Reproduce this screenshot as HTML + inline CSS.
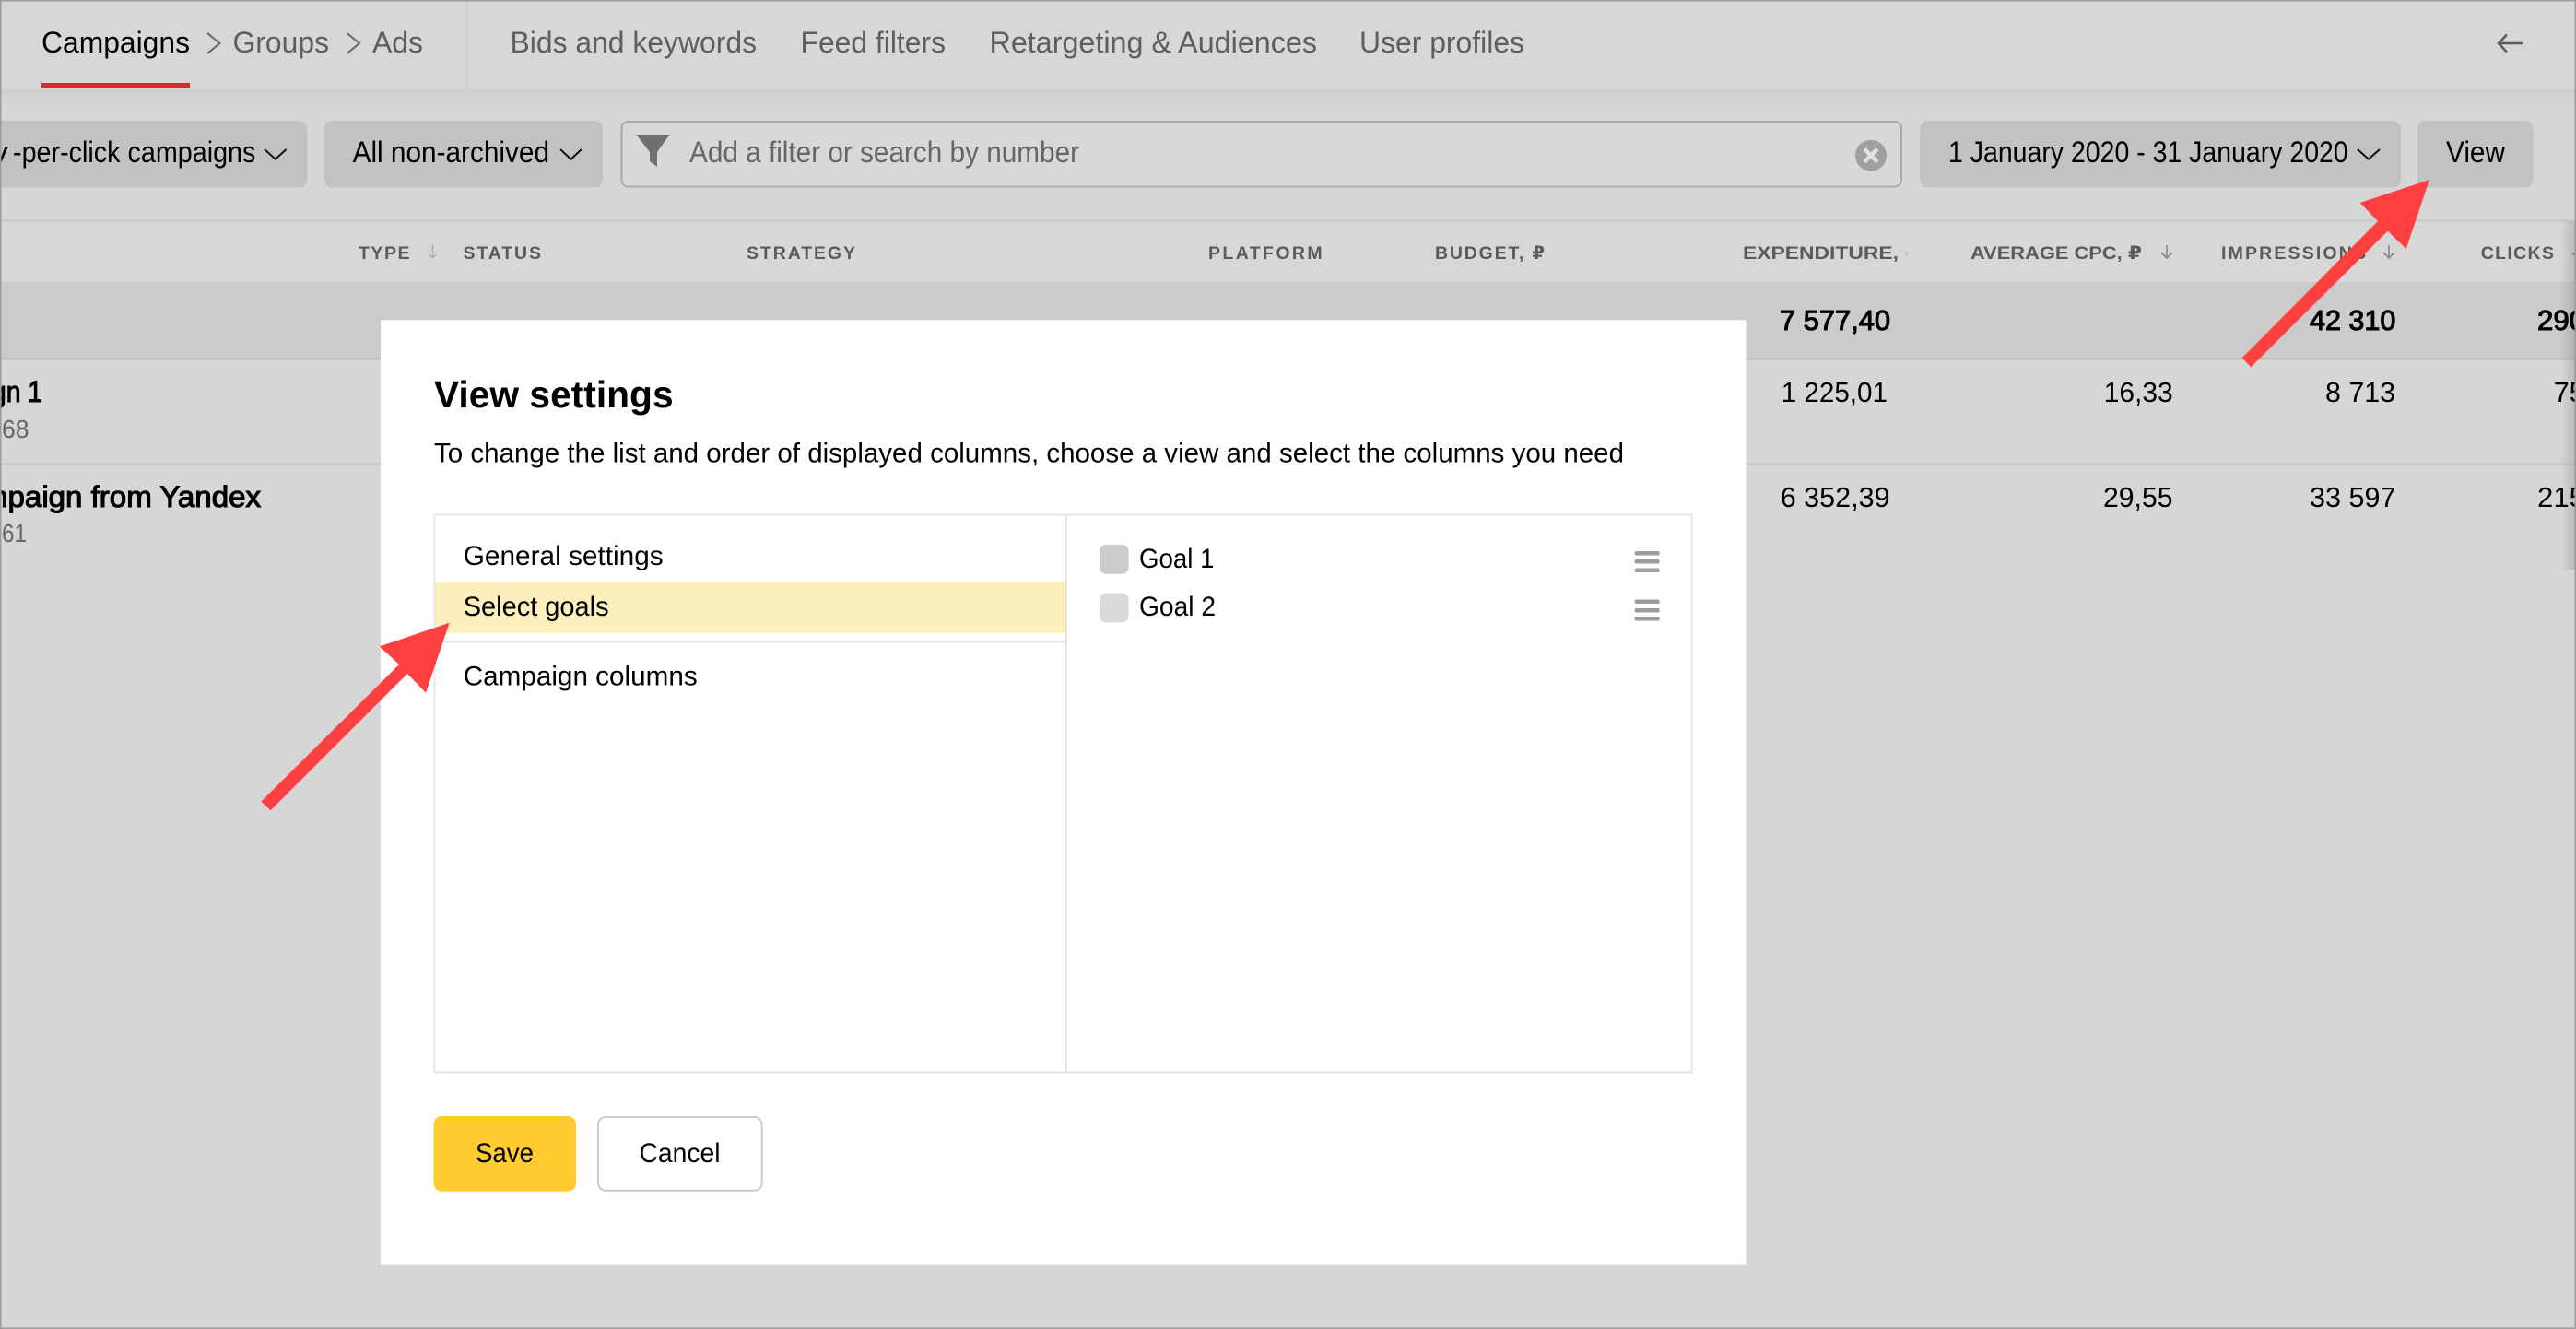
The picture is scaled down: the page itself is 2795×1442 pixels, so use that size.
<!DOCTYPE html>
<html lang="en">
<head>
<meta charset="utf-8">
<title>View settings</title>
<style>
html,body{margin:0;padding:0;width:2795px;height:1442px;overflow:hidden;background:#d6d6d6}
svg{display:block;position:absolute;left:0;top:0}
text{font-family:"Liberation Sans","DejaVu Sans",sans-serif;font-size:32px;fill:#000;white-space:pre}
.tab{fill:#5e5e5e}
.h{font-size:19.500px;font-weight:bold;fill:#5a5a5a}
.b{stroke:#000;stroke-width:1.100px}
.t{font-weight:bold;font-size:41px}
.m{font-size:30px}
.n{font-size:31px}
.g{fill:#666;font-size:28px}
</style>
</head>
<body>
<svg width="2795" height="1442" viewBox="0 0 2795 1442" xmlns="http://www.w3.org/2000/svg">
<defs>
<linearGradient id="sh" x1="0" x2="0" y1="0" y2="1"><stop offset="0" stop-color="#cfcfcf"/><stop offset="1" stop-color="#d6d6d6"/></linearGradient>
<linearGradient id="rs" x1="0" x2="1" y1="0" y2="0"><stop offset="0" stop-color="#000" stop-opacity="0"/><stop offset="1" stop-color="#000" stop-opacity=".14"/></linearGradient>
</defs>
<rect width="2795" height="1442" fill="#d6d6d6"/>

<!-- tabs -->
<rect y="0" width="2795" height="97" fill="#d7d7d7"/>
<rect y="97" width="2795" height="20" fill="url(#sh)"/>
<rect x="506" y="0" width="1.500" height="97" fill="#cbcbcb"/>
<rect x="45" y="90" width="161" height="6" fill="#d32f33"/>
<text x="45" y="57" textLength="161" lengthAdjust="spacingAndGlyphs">Campaigns</text>
<path d="M225 36 L238.500 47 L225 58" fill="none" stroke="#666" stroke-width="2"/>
<text class="tab" x="252.500" y="57" textLength="104.500" lengthAdjust="spacingAndGlyphs">Groups</text>
<path d="M376.500 36 L390 47 L376.500 58" fill="none" stroke="#666" stroke-width="2"/>
<text class="tab" x="404" y="57" textLength="55" lengthAdjust="spacingAndGlyphs">Ads</text>
<text class="tab" x="553.500" y="57" textLength="267.500" lengthAdjust="spacingAndGlyphs">Bids and keywords</text>
<text class="tab" x="868.500" y="57" textLength="157.500" lengthAdjust="spacingAndGlyphs">Feed filters</text>
<text class="tab" x="1073.500" y="57" textLength="355.500" lengthAdjust="spacingAndGlyphs">Retargeting &amp; Audiences</text>
<text class="tab" x="1475" y="57" textLength="179" lengthAdjust="spacingAndGlyphs">User profiles</text>
<path d="M2737 47 H2711 M2720 37.500 L2711 47 L2720 56.500" fill="none" stroke="#5a5a5a" stroke-width="2.500"/>

<!-- toolbar -->
<rect x="-12" y="131" width="345.500" height="72.500" rx="9" fill="#c2c2c2"/>
<text x="-9" y="176" textLength="18" lengthAdjust="spacingAndGlyphs">y</text>
<text x="14" y="176" textLength="263.400" lengthAdjust="spacingAndGlyphs">-per-click campaigns</text>
<path d="M287 162 L298.800 172.700 L310.600 162" fill="none" stroke="#111" stroke-width="2"/>
<rect x="352" y="131" width="302" height="72.500" rx="9" fill="#c2c2c2"/>
<text x="382.600" y="176" textLength="213.400" lengthAdjust="spacingAndGlyphs">All non-archived</text>
<path d="M608 162 L619.500 172.700 L631 162" fill="none" stroke="#111" stroke-width="2"/>
<rect x="674.500" y="132" width="1388.500" height="70.500" rx="7" fill="#d8d8d8" stroke="#aaa" stroke-width="2"/>
<path d="M691 147 H726 L713 165 V181 L705 175 V165 Z" fill="#707070"/>
<text x="748" y="176" textLength="423" lengthAdjust="spacingAndGlyphs" style="fill:#666">Add a filter or search by number</text>
<circle cx="2030" cy="168.700" r="17" fill="#a0a0a0"/>
<path d="M2023 161.700 L2037 175.700 M2037 161.700 L2023 175.700" stroke="#e2e2e2" stroke-width="4.500" fill="none"/>
<rect x="2083.300" y="131" width="521.700" height="72.500" rx="9" fill="#c2c2c2"/>
<text x="2114" y="176" textLength="433.700" lengthAdjust="spacingAndGlyphs">1 January 2020 - 31 January 2020</text>
<path d="M2558 162 L2570 172.700 L2582 162" fill="none" stroke="#111" stroke-width="2"/>
<rect x="2623" y="131" width="125.600" height="72.500" rx="9" fill="#c2c2c2"/>
<text x="2654" y="176" textLength="64" lengthAdjust="spacingAndGlyphs">View</text>

<!-- table -->
<rect y="238" width="2795" height="2.500" fill="#c9c9c9"/>
<rect y="240.500" width="2795" height="65.500" fill="#d7d7d7"/>
<rect y="306" width="2795" height="82" fill="#cbcbcb"/>
<rect y="388" width="2795" height="2.500" fill="#bdbdbd"/>
<rect y="502" width="2795" height="2" fill="#c9c9c9"/>

<text class="h" x="389" y="281" textLength="55.500" lengthAdjust="spacing">TYPE</text>
<path d="M469.500 266 V280 M466 276 L469.500 280 L473 276" fill="none" stroke="#aaa" stroke-width="1.300"/>
<text class="h" x="502.500" y="281" textLength="84.500" lengthAdjust="spacing">STATUS</text>
<text class="h" x="810" y="281" textLength="118" lengthAdjust="spacing">STRATEGY</text>
<text class="h" x="1311" y="281" textLength="123.600" lengthAdjust="spacing">PLATFORM</text>
<text class="h" x="1557" y="281" textLength="119" lengthAdjust="spacing">BUDGET, ₽</text>
<text class="h" x="1891" y="281" textLength="169" lengthAdjust="spacingAndGlyphs">EXPENDITURE,</text>
<rect x="2067" y="272" width="3" height="6" fill="#c8c8c8"/>
<text class="h" x="2138" y="281" textLength="186" lengthAdjust="spacingAndGlyphs">AVERAGE CPC, ₽</text>
<path d="M2351 266 V280 M2345 274 L2351 280 L2357 274" fill="none" stroke="#888" stroke-width="1.600"/>
<text class="h" x="2410" y="281" textLength="157" lengthAdjust="spacing">IMPRESSIONS</text>
<path d="M2592 266 V280 M2586 274 L2592 280 L2598 274" fill="none" stroke="#888" stroke-width="1.600"/>
<text class="h" x="2691.700" y="281" textLength="79.300" lengthAdjust="spacing">CLICKS</text>
<path d="M2797 266 V280 M2791 274 L2797 280" fill="none" stroke="#888" stroke-width="1.600"/>

<text class="b n" x="1931" y="358" textLength="120" lengthAdjust="spacingAndGlyphs">7 577,40</text>
<text class="b n" x="2506" y="358" textLength="93.300" lengthAdjust="spacingAndGlyphs">42 310</text>
<text class="b n" x="2753" y="358" textLength="52" lengthAdjust="spacingAndGlyphs">290</text>

<text class="b" x="-9" y="436" textLength="55" lengthAdjust="spacingAndGlyphs">gn 1</text>
<text class="g" x="2" y="475" textLength="29.500" lengthAdjust="spacingAndGlyphs">68</text>
<text class="n" x="1932.700" y="436" textLength="115.300" lengthAdjust="spacingAndGlyphs">1 225,01</text>
<text class="n" x="2282.700" y="436" textLength="75" lengthAdjust="spacingAndGlyphs">16,33</text>
<text class="n" x="2523" y="436" textLength="76" lengthAdjust="spacingAndGlyphs">8 713</text>
<text class="n" x="2770.700" y="436" textLength="34" lengthAdjust="spacingAndGlyphs">75</text>

<text class="b" x="-19" y="550" textLength="302" lengthAdjust="spacingAndGlyphs">mpaign from Yandex</text>
<text class="g" x="2" y="588" textLength="27" lengthAdjust="spacingAndGlyphs">61</text>
<text class="n" x="1931.700" y="550" textLength="119" lengthAdjust="spacingAndGlyphs">6 352,39</text>
<text class="n" x="2282" y="550" textLength="75.500" lengthAdjust="spacingAndGlyphs">29,55</text>
<text class="n" x="2506" y="550" textLength="93.500" lengthAdjust="spacingAndGlyphs">33 597</text>
<text class="n" x="2753" y="550" textLength="52" lengthAdjust="spacingAndGlyphs">215</text>

<rect x="2778" y="240" width="17" height="378" fill="url(#rs)"/>

<!-- modal -->
<rect x="413" y="347.300" width="1481.400" height="1025.400" fill="#fff"/>
<text class="t" x="471" y="442" textLength="259.600" lengthAdjust="spacingAndGlyphs">View settings</text>
<text class="m" x="471" y="501.500" textLength="1291" lengthAdjust="spacingAndGlyphs">To change the list and order of displayed columns, choose a view and select the columns you need</text>

<rect x="471.500" y="558.500" width="1364" height="605" fill="#fff" stroke="#e5e5e5" stroke-width="2"/>
<rect x="1156" y="559" width="2" height="604" fill="#e5e5e5"/>
<rect x="472.500" y="632" width="683.500" height="54.800" fill="#fef0bc"/>
<rect x="472.500" y="695.500" width="683.500" height="2" fill="#e5e5e5"/>
<text class="m" x="502.700" y="613" textLength="217" lengthAdjust="spacingAndGlyphs">General settings</text>
<text class="m" x="502.700" y="668" textLength="157.900" lengthAdjust="spacingAndGlyphs">Select goals</text>
<text class="m" x="502.700" y="743.500" textLength="254" lengthAdjust="spacingAndGlyphs">Campaign columns</text>

<rect x="1193" y="591" width="31.600" height="31.700" rx="7" fill="#cccccc"/>
<rect x="1193" y="643.700" width="31.600" height="31.600" rx="7" fill="#d9d9d9"/>
<text class="m" x="1236" y="616" textLength="81.500" lengthAdjust="spacingAndGlyphs">Goal 1</text>
<text class="m" x="1236" y="668" textLength="83" lengthAdjust="spacingAndGlyphs">Goal 2</text>
<g fill="#9c9c9c">
<rect x="1773.500" y="598" width="27.200" height="4.500" rx="2"/>
<rect x="1773.500" y="607" width="27.200" height="4.500" rx="2"/>
<rect x="1773.500" y="616.500" width="27.200" height="4.500" rx="2"/>
<rect x="1773.500" y="650.500" width="27.200" height="4.500" rx="2"/>
<rect x="1773.500" y="660" width="27.200" height="4.500" rx="2"/>
<rect x="1773.500" y="669" width="27.200" height="4.500" rx="2"/>
</g>

<rect x="470.500" y="1211" width="154.500" height="81.700" rx="9" fill="#ffcb2e"/>
<text class="m" x="516" y="1261" textLength="63" lengthAdjust="spacingAndGlyphs">Save</text>
<rect x="649" y="1212" width="177.700" height="79.700" rx="8" fill="#fff" stroke="#cbcbcb" stroke-width="2"/>
<text class="m" x="693.500" y="1261" textLength="88" lengthAdjust="spacingAndGlyphs">Cancel</text>

<!-- arrows -->
<path d="M2636 195 L2560.700 220 L2580 240 L2432.700 388.300 L2442.300 398.300 L2590.700 250.700 L2610.700 270 Z" fill="#ff4040"/>
<path d="M487.600 675.700 L411.800 701.400 L433 721 L283.300 869.600 L293.600 879.300 L442 731 L462 751.800 Z" fill="#ff4040"/>

<!-- page border -->
<rect x="0" y="0" width="2795" height="1.500" fill="#9c9c9c"/>
<rect x="0" y="1440.500" width="2795" height="1.500" fill="#9c9c9c"/>
<rect x="0" y="0" width="1.500" height="1442" fill="#9c9c9c"/>
<rect x="2793.500" y="0" width="1.500" height="1442" fill="#9c9c9c"/>
</svg>
</body>
</html>
